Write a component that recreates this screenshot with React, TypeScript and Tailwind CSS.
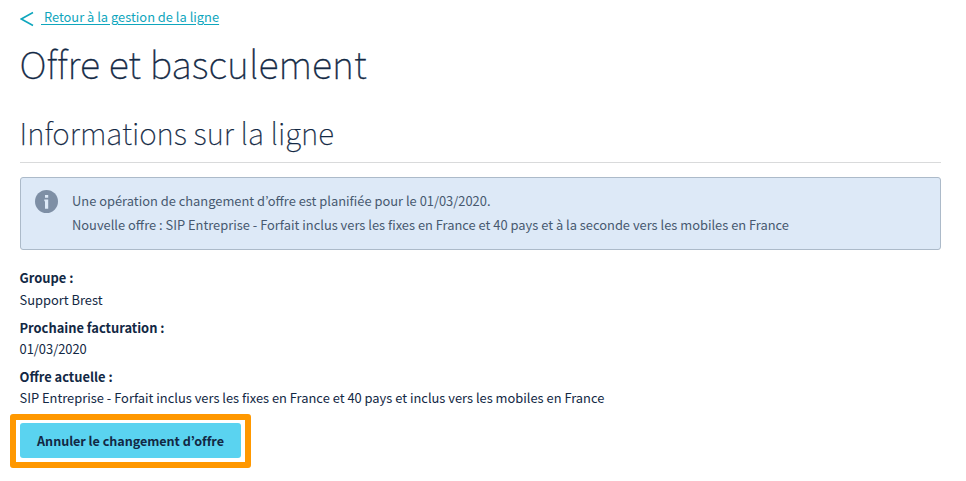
const details = [
  { label: 'Groupe :', value: 'Support Brest', box: 'h-[50px]', gap: 'mt-px' },
  { label: 'Prochaine facturation :', value: '01/03/2020', box: 'h-[49px]', gap: '' },
  {
    label: 'Offre actuelle :',
    value: 'SIP Entreprise - Forfait inclus vers les fixes en France et 40 pays et inclus vers les mobiles en France',
    box: 'h-[48px]',
    gap: '',
  },
];

export default function App() {
  return (
    <main className="h-[481px] overflow-hidden bg-white pl-5 pr-[25px] pt-[5px] font-['Noto_Sans_CJK_KR','Noto_Sans_CJK_JP',sans-serif] text-[12.88px] text-[#122844]">
      <a href="#" className="flex h-6 w-fit items-center leading-6 text-[#0fa6bd]">
        <svg width="14" height="16" viewBox="0 0 14 16" fill="none" stroke="currentColor" strokeWidth="1.5" className="mt-[3px]">
          <path d="M13 1.5 1.3 8 13 14.5" />
        </svg>
        <span className="ml-[7px] whitespace-pre underline underline-offset-2"> Retour à la gestion de la ligne</span>
      </a>
      <h1 className="-ml-[0.5px] mt-[10px] h-12 whitespace-nowrap text-[37.8px] font-thin leading-[48px] [-webkit-text-stroke:0.35px_#122844] [font-variant-ligatures:none] [word-spacing:0.6px]">Offre et basculement</h1>
      <h2 className="mt-[25px] h-[51px] whitespace-nowrap border-b border-[#d9dadb] text-[29.75px] font-thin leading-[41px] [-webkit-text-stroke:0.25px_#122844]">
        <span className="-ml-[0.5px]">Informations sur la ligne</span>
      </h2>
      <section className="mt-[14px] flex h-[73px] rounded-[3px] border border-[#acbac9] bg-[#dde9f7] pl-[14px] pt-[11px] text-[#475970]">
        <svg width="23" height="23" viewBox="0 0 23 23" className="mt-px shrink-0">
          <circle cx="11.5" cy="11.5" r="11.5" fill="#7e8fa5" />
          <path d="M10 5h3.2v2.8H10zM9.3 9.5h3.9v9.3H10v-7.6h-.7z" fill="#dde9f7" />
        </svg>
        <div className="ml-[14px] whitespace-nowrap leading-6">
          <p>Une opération de changement d’offre est planifiée pour le 01/03/2020.</p>
          <p>Nouvelle offre : SIP Entreprise - Forfait inclus vers les fixes en France et 40 pays et à la seconde vers les mobiles en France</p>
        </div>
      </section>
      <dl className="-ml-[0.5px] mt-[17px] whitespace-nowrap leading-[21px]">
        {details.map(({ label, value, box, gap }) => (
          <div key={label} className={box}>
            <dt className="font-bold">{label}</dt>
            <dd className={gap}>{value}</dd>
          </div>
        ))}
      </dl>
      <div className="-ml-[10px] h-[54px] w-[241px] rounded-[3px] border-[6px] border-[#ff9800] px-1 pt-[3px]">
        <button className="h-[35px] w-[221px] whitespace-nowrap rounded-[3px] bg-[#5ad3f0] pt-0.5 text-[12.6px] font-semibold tracking-[-0.04px]">
          Annuler le changement d’offre
        </button>
      </div>
    </main>
  );
}
